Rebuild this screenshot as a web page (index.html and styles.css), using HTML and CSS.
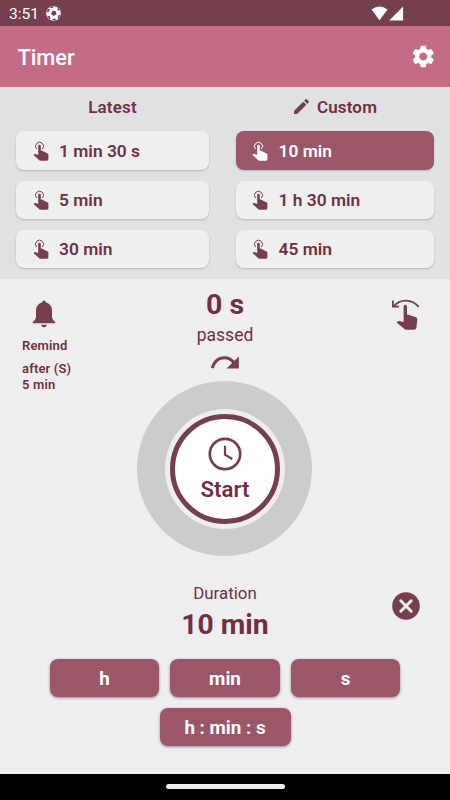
FILE: index.html
```html
<!DOCTYPE html>
<html lang="en">
<head>
<meta charset="utf-8">
<title>Timer</title>
<link rel="stylesheet" href="styles.css">
</head>
<body>
<svg width="0" height="0" class="defs">
  <symbol id="tap" viewBox="0 0 16 20">
    <path d="M3.600 8A4 4 0 1 1 9.400 8" fill="none" stroke="currentColor" stroke-width="1"/>
    <path d="M5.200 5a1.300 1.300 0 0 1 2.600 0V9.600h1l5.800 2.800q.8.500.8 1.400v4.500q0 1.400-1.400 1.400H7.600q-.8 0-1.300-.5L.5 14l.8-.7q.5-.4 1.100-.2l2.800.9z" fill="currentColor"/>
  </symbol>
</svg>
<div class="screen">
  <header class="status">
    <span class="clock">3:51</span>
    <svg class="ball" viewBox="0 0 14 14"><circle cx="7" cy="7" r="6.800" fill="#fff"/><path d="M6.200 4.300l3 .6.600 2.800-2.600 1.700-2.500-2zM3.500 1.800L6 1.900 7.200.6 5.500.4zM.6 5.800l1.900-.3L3.600 3 2 2.500zM12.900 4.500l-1.700-.2-1-2 1.500-.2zM13.400 8.200l-1.800.4-.9 2.300 1.200.9zM1.100 9.200l2.200.2 1 2.400-1.300.600zM6 12l2.500-.4.9 1.400-2.400.7z" fill="#753f4e"/></svg>
    <svg class="signals" viewBox="0 0 34 16"><path d="M.6 3.500Q8.500-2.300 16.500 3.500L8.500 14.300zM18.300 14.500L32.100.6V14.500z" fill="#fff"/></svg>
  </header>
  <div class="appbar">
    <h1>Timer</h1>
    <svg class="gear" viewBox="2 2 20 20"><path fill="#fff" d="M19.140 12.940c.040-.3.060-.61.060-.94s-.020-.64-.070-.94l2.030-1.580c.18-.14.230-.41.120-.61l-1.920-3.320c-.12-.22-.37-.29-.59-.22l-2.390.96c-.5-.38-1.030-.7-1.620-.94l-.36-2.540c-.040-.24-.24-.41-.48-.41h-3.840c-.24 0-.43.170-.47.410l-.36 2.540c-.59.240-1.130.570-1.620.940l-2.390-.96c-.22-.080-.47 0-.59.220L2.740 8.870c-.12.210-.080.470.120.610l2.030 1.580c-.050.3-.090.630-.090.940s.020.640.070.940l-2.030 1.580c-.18.140-.23.410-.12.610l1.920 3.320c.12.220.37.290.59.220l2.390-.96c.5.380 1.030.7 1.620.94l.36 2.540c.050.240.24.410.48.410h3.840c.24 0 .44-.17.470-.41l.36-2.540c.59-.24 1.130-.56 1.620-.94l2.390.96c.22.080.47 0 .59-.22l1.920-3.320c.12-.22.070-.47-.12-.61zM12 15.600c-1.980 0-3.600-1.620-3.600-3.600s1.620-3.600 3.600-3.600 3.600 1.620 3.600 3.600-1.620 3.600-3.600 3.600z"/></svg>
  </div>
  <section class="presets">
    <div class="col">
      <h2>Latest</h2>
      <button class="preset"><svg><use href="#tap"/></svg>1 min 30 s</button>
      <button class="preset"><svg><use href="#tap"/></svg>5 min</button>
      <button class="preset"><svg><use href="#tap"/></svg>30 min</button>
    </div>
    <div class="col">
      <h2><svg class="pencil" viewBox="3 3 18 18"><path fill="currentColor" d="M3 17.250V21h3.750L17.810 9.940l-3.750-3.750zM20.710 7.040c.39-.39.39-1.020 0-1.410l-2.340-2.340c-.39-.39-1.020-.39-1.410 0l-1.830 1.830 3.750 3.750z"/></svg>Custom</h2>
      <button class="preset active"><svg><use href="#tap"/></svg>10 min</button>
      <button class="preset"><svg><use href="#tap"/></svg>1 h 30 min</button>
      <button class="preset"><svg><use href="#tap"/></svg>45 min</button>
    </div>
  </section>
  <main>
    <div class="top">
      <div class="remind">
        <svg class="bell" viewBox="0 0 24 28"><path fill="currentColor" d="M10.200 2.300Q10.200.6 12 .6t1.800 1.700Q19.800 4 20 10.500V17q.3 3.200 3.300 5v1.200H.700V22q3-1.800 3.300-5v-6.500Q4.200 4 10.200 2.300zM9 24.800h6Q14.400 27.300 12 27.300t-3-2.500z"/></svg>
        <p>Remind</p>
        <p class="after">after (S)<br>5 min</p>
      </div>
      <div class="passed">
        <strong>0 s</strong>
        <span>passed</span>
        <svg class="redo" viewBox="0 0 28 14"><path d="M1.300 12C4.500.8 16-1.500 23 6.500" fill="none" stroke="currentColor" stroke-width="3"/><path d="M27.800 .5v12H15.500z" fill="currentColor"/></svg>
      </div>
      <svg class="swipe" viewBox="0 0 30 32"><path d="M2.500 7.500C9-.5 21-.5 27.700 8M1.900 1.500V7.700H8" fill="none" stroke="currentColor" stroke-width="1.800"/><path d="M12.600 7.500a1.700 1.700 0 0 1 3.400 0V15.500l1.500.2 7.700 2.500q1.200.6 1.100 2l-.8 8.300q-.3 2.300-2.500 2.300h-7.500q-1 0-1.700-.6L5.500 23.500l1.200-1.100q.6-.5 1.500-.3l4.400.9z" fill="currentColor"/></svg>
    </div>
    <div class="dial">
      <button class="start">
        <svg viewBox="0 0 34 34"><circle cx="17" cy="17" r="15.200" fill="none" stroke="currentColor" stroke-width="2.700"/><path d="M17 8.800V17.600L24.300 22" fill="none" stroke="currentColor" stroke-width="2.200"/></svg>
        <span>Start</span>
      </button>
    </div>
    <div class="duration">
      <div class="value"><span>Duration</span><strong>10 min</strong></div>
      <svg class="clear" viewBox="0 0 28 28"><circle cx="14" cy="14" r="13.800" fill="currentColor"/><path d="M8.800 8.800l10.400 10.400M19.200 8.800L8.800 19.200" stroke="#eee" stroke-width="3" stroke-linecap="round"/></svg>
    </div>
    <div class="units">
      <button>h</button><button>min</button><button>s</button>
      <button class="wide">h : min : s</button>
    </div>
  </main>
  <footer class="nav"><div class="handle"></div></footer>
</div>
</body>
</html>
```
FILE: styles.css
```css
* { box-sizing: border-box; margin: 0; padding: 0; }
body { width: 450px; height: 800px; overflow: hidden; font-family: Roboto, sans-serif; color: #6f3044; }
button { font: inherit; color: inherit; border: 0; }
svg { display: block; flex: none; color: #753f4e; }
.defs { display: none; }
.screen { width: 450px; height: 800px; display: flex; flex-direction: column; background: #eee; }
.status { height: 26px; background: #753f4e; color: #fff; display: flex; align-items: center; padding: 1px 45px 0 9px; }
.clock { font-size: 15.500px; width: 36.500px; line-height: 24px; }
.ball { width: 15px; height: 15px; }
.signals { width: 34px; height: 16px; margin-left: auto; }
.appbar { height: 61px; background: #c46c85; color: #fff; display: flex; align-items: center; justify-content: space-between; padding: 0 15.500px 0 17.500px; }
h1 { font-size: 21.800px; font-weight: 500; line-height: 26px; padding-top: 2px; }
.gear { width: 22.500px; height: 23px; }
.presets { height: 192px; background: #e1e1e1; display: grid; grid-template-columns: 193px 198px; column-gap: 27px; padding: 0 16px; }
.col { display: flex; flex-direction: column; gap: 11px; }
h2 { height: 33.400px; font-size: 17px; font-weight: 600; line-height: 40px; display: flex; justify-content: center; align-items: flex-start; letter-spacing: .15px; }
.pencil { width: 15px; height: 15px; margin: 12px 8px 0 1px; }
.preset { height: 38.200px; border-radius: 8px; background: #efefef; box-shadow: 0 1px 2px rgba(0,0,0,.2); display: flex; align-items: center; padding: .5px 0 0 16.500px; gap: 10.500px; font-size: 17.400px; line-height: 20px; font-weight: 600; color: #6f3044; }
.col + .col .preset { padding-left: 16px; gap: 10.500px; }
.preset svg { width: 16px; height: 20px; }
.preset.active { background: #9c566a; color: #fff; }
.preset.active svg { color: #fff; }
main { height: 495px; display: flex; flex-direction: column; align-items: center; }
.top { width: 450px; height: 102px; display: grid; grid-template-columns: 150px 150px 150px; }
.remind { padding: 21px 0 0 22px; font-size: 13px; font-weight: 600; line-height: 16px; letter-spacing: .15px; }
.bell { width: 24px; height: 28px; margin: 0 0 10px 10px; }
.after { margin-top: 7px; }
.passed { display: flex; flex-direction: column; align-items: center; }
.passed strong { font-size: 28.500px; line-height: 34px; font-weight: 700; padding-top: 8.500px; }
.passed span { font-size: 17.500px; line-height: 22px; margin-top: 2.500px; }
.redo { width: 28px; height: 14px; margin: 10px 1px 0 0; }
.swipe { width: 30px; height: 32px; margin: 19.500px 0 0 91px; }
.dial { width: 175px; height: 175px; border-radius: 50%; background: #ccc; display: flex; align-items: center; justify-content: center; flex: none; margin-right: 1px; }
.start { width: 110px; height: 110px; border-radius: 50%; border: 5.500px solid #753f4e; background: #fff; box-shadow: 0 0 0 5px #eee; display: flex; flex-direction: column; align-items: center; padding-top: 18px; }
.start svg { width: 34px; height: 34px; }
.start span { font-size: 22.200px; line-height: 28px; font-weight: 600; margin: 4px 0 0 1px; }
.duration { width: 450px; height: 103px; padding-top: 27px; display: grid; grid-template-columns: 150px 150px 150px; }
.value { grid-column: 2; display: flex; flex-direction: column; align-items: center; }
.value span { font-size: 16.900px; line-height: 20px; }
.value strong { font-size: 28.300px; line-height: 34px; margin-top: 5px; font-weight: 700; }
.clear { width: 28px; height: 28px; margin: 9px 0 0 92px; }
.units { width: 352px; display: flex; flex-wrap: wrap; justify-content: center; gap: 11px; }
.units button { width: 109.500px; height: 38px; border-radius: 8px; background: #9c566a; color: #fff; font-size: 18.800px; font-weight: 700; box-shadow: 0 1px 3px rgba(0,0,0,.4); padding-top: 2px; }
.units .wide { width: 131px; }
.nav { height: 26px; background: #000; display: flex; justify-content: center; }
.handle { width: 119px; height: 5px; border-radius: 3px; background: #eee; margin-top: 10px; }
```
